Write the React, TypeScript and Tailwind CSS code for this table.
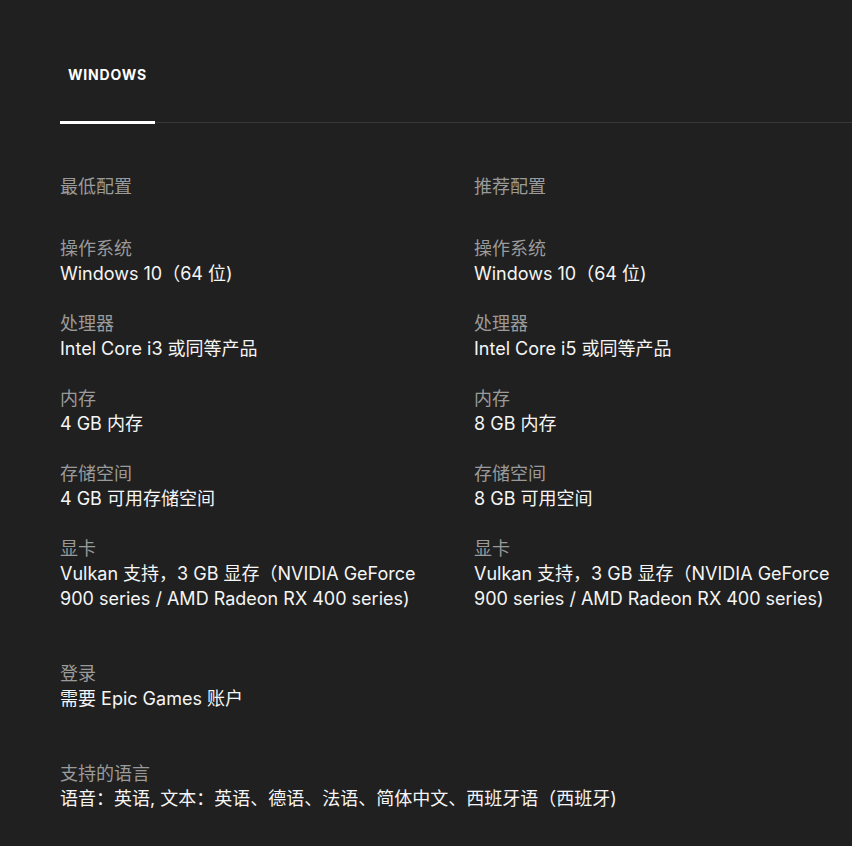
import React from 'react';

const minSpecs = [
  { label: '操作系统', value: 'Windows 10（64 位)' },
  { label: '处理器', value: 'Intel Core i3 或同等产品' },
  { label: '内存', value: '4 GB 内存' },
  { label: '存储空间', value: '4 GB 可用存储空间' },
  { label: '显卡', value: 'Vulkan 支持，3 GB 显存（NVIDIA GeForce 900 series / AMD Radeon RX 400 series)' },
];

const recSpecs = [
  { label: '操作系统', value: 'Windows 10（64 位)' },
  { label: '处理器', value: 'Intel Core i5 或同等产品' },
  { label: '内存', value: '8 GB 内存' },
  { label: '存储空间', value: '8 GB 可用空间' },
  { label: '显卡', value: 'Vulkan 支持，3 GB 显存（NVIDIA GeForce 900 series / AMD Radeon RX 400 series)' },
];

function Spec({ label, value }: { label: string; value: string }) {
  return (
    <div className="mb-[25px]">
      <div className="text-[#9a9a9a]">{label}</div>
      <div className="text-[#f5f5f5]">{value}</div>
    </div>
  );
}

function Column({ title, specs }: { title: string; specs: { label: string; value: string }[] }) {
  return (
    <div>
      <h3 className="text-[#9a9a9a] mb-[37px]">{title}</h3>
      {specs.map((s) => (
        <Spec key={s.label} label={s.label} value={s.value} />
      ))}
    </div>
  );
}

export default function App() {
  return (
    <div
      className="min-h-screen bg-[#202020] pl-[60px] pt-[61px] overflow-hidden text-[18px] leading-[25px]"
      style={{ fontFamily: 'Inter, "Noto Sans CJK SC", sans-serif' }}
    >
      {/* Tabs */}
      <div className="flex border-b border-[#383838]">
        <div className="w-[95px] -mb-[2px] pb-[35px] border-b-[3px] border-white text-center">
          <span className="text-[14px] leading-[20px] font-bold text-white tracking-[0.06em]">WINDOWS</span>
        </div>
      </div>

      {/* Requirements */}
      <div className="grid grid-cols-[370px_370px] gap-x-[44px] mt-[51px]">
        <Column title="最低配置" specs={minSpecs} />
        <Column title="推荐配置" specs={recSpecs} />
      </div>

      <div className="mt-[25px]">
        <div className="text-[#9a9a9a]">登录</div>
        <div className="text-[#f5f5f5]">需要 Epic Games 账户</div>
      </div>

      <div className="mt-[50px] pb-[30px]">
        <div className="text-[#9a9a9a]">支持的语言</div>
        <div className="text-[#f5f5f5]">语音：英语, 文本：英语、德语、法语、简体中文、西班牙语（西班牙)</div>
      </div>
    </div>
  );
}
